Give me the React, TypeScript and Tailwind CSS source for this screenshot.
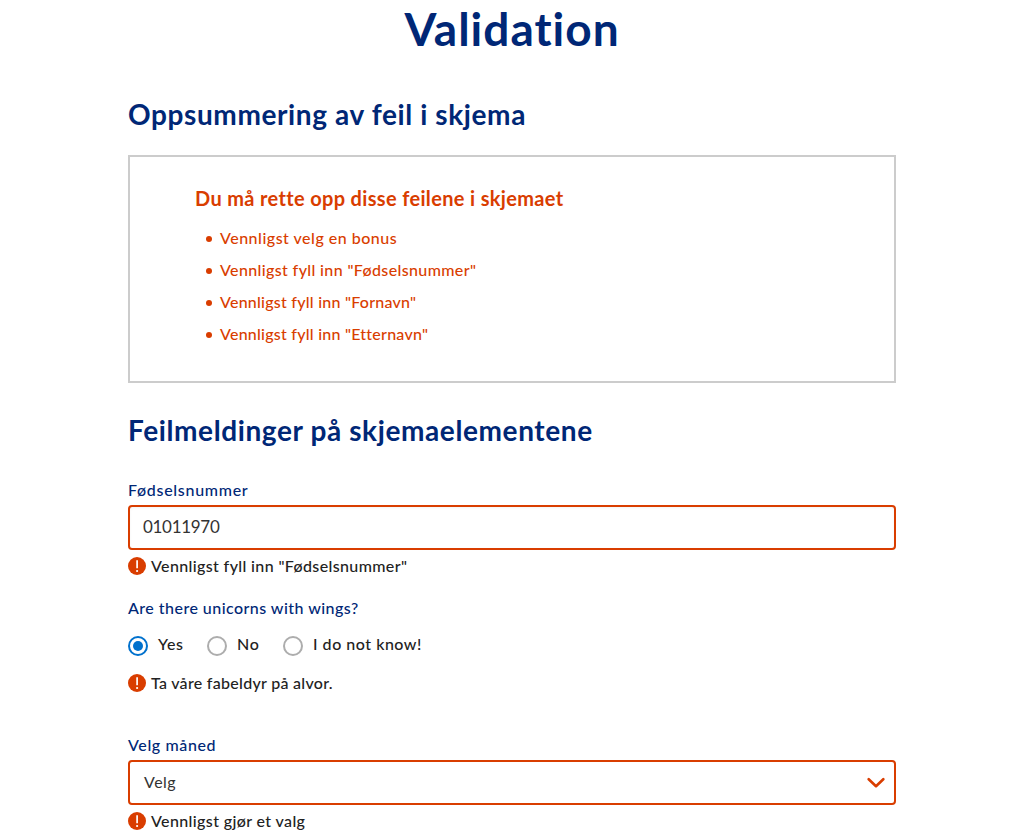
import { useState } from "react";

function ErrorMessage({ children, className = "" }: { children: string; className?: string }) {
  return (
    <div className={`flex h-[18px] items-center gap-[5px] font-medium whitespace-nowrap text-[#222222] ${className}`}>
      <svg width="18" height="18" viewBox="0 0 18 18" className="shrink-0" aria-hidden="true">
        <circle cx="9" cy="9" r="9" fill="#d93d00" />
        <path d="M9.1 3.2v8" stroke="#fff" strokeWidth="1.7" />
        <circle cx="9.1" cy="14" r="1.1" fill="#fff" />
      </svg>
      <span>{children}</span>
    </div>
  );
}

const errors = [
  { text: "Vennligst velg en bonus", spacing: "tracking-[0.5px]" },
  { text: 'Vennligst fyll inn "Fødselsnummer"', spacing: "tracking-[0.37px]" },
  { text: 'Vennligst fyll inn "Fornavn"', spacing: "tracking-[0.24px]" },
  { text: 'Vennligst fyll inn "Etternavn"', spacing: "tracking-[0.24px]" },
];

const options = [
  { text: "Yes", spacing: "tracking-[0.6px]", width: "w-[79px]" },
  { text: "No", spacing: "tracking-[0.8px]", width: "w-[76px]" },
  { text: "I do not know!", spacing: "tracking-[0.52px]", width: "w-[160px]" },
];

export default function App() {
  const [selected, setSelected] = useState("Yes");
  const [number, setNumber] = useState("01011970");

  return (
    <main className="h-[834px] overflow-hidden bg-white font-['Lato',sans-serif] text-base leading-[18px]">
      <div className="ml-32 flex w-[768px] flex-col">
        <h1 className="h-[56px] text-center text-[46px] leading-[58px] font-bold tracking-[1px] text-[#002776]">
          Validation
        </h1>
        <h2 className="mt-10 h-9 text-[28px] leading-9 font-bold tracking-[0.61px] whitespace-nowrap text-[#002776]">
          Oppsummering av feil i skjema
        </h2>

        <section className="mt-[23px] h-[228px] border-2 border-[#cccccc] pt-[29px] pl-[65px] text-[#d93d00]">
          <h3 className="h-6 text-xl leading-6 font-bold tracking-[0.34px]">
            Du må rette opp disse feilene i skjemaet
          </h3>
          <ul className="mt-3 font-medium">
            {errors.map((e) => (
              <li key={e.text} className="flex h-8 items-center leading-8">
                <span className="mt-0.5 ml-[11px] h-[6px] w-[6px] rounded-full bg-[#d93d00]" />
                <span className={`ml-2 ${e.spacing}`}>{e.text}</span>
              </li>
            ))}
          </ul>
        </section>

        <h2 className="mt-7 h-9 text-[28px] leading-[38px] font-bold tracking-[0.61px] whitespace-nowrap text-[#002776]">
          Feilmeldinger på skjemaelementene
        </h2>

        <label htmlFor="number" className="mt-[34px] h-[18px] font-medium tracking-[0.7px] text-[#002776]">
          Fødselsnummer
        </label>
        <input
          id="number"
          value={number}
          onChange={(e) => setNumber(e.target.value)}
          className="mt-[6px] h-[45px] rounded-[4px] border-2 border-[#d93d00] pr-3 pb-[3px] pl-[13px] text-[17px] font-normal tracking-[-0.3px] text-[#333333] shadow-[inset_0_1px_3px_rgba(0,0,0,0.05)] outline-none"
        />
        <ErrorMessage className="mt-[7px] tracking-[0.37px]">{'Vennligst fyll inn "Fødselsnummer"'}</ErrorMessage>

        <fieldset className="mt-6">
          <legend className="h-[18px] font-medium tracking-[0.46px] text-[#002776]">
            Are there unicorns with wings?
          </legend>
          <div className="flex pt-[19px]">
            {options.map((o) => (
              <label key={o.text} className={`flex h-5 gap-[10px] font-medium whitespace-nowrap text-[#222222] ${o.width}`}>
                <input
                  type="radio"
                  name="unicorns"
                  checked={selected === o.text}
                  onChange={() => setSelected(o.text)}
                  className="peer sr-only"
                />
                <span className="flex h-5 w-5 shrink-0 items-center justify-center rounded-full border-2 border-[#adadad] peer-checked:border-[#0071cd] peer-checked:*:bg-[#0071cd]">
                  <span className="h-[10px] w-[10px] rounded-full" />
                </span>
                <span className={`h-[18px] leading-4 ${o.spacing}`}>{o.text}</span>
              </label>
            ))}
          </div>
        </fieldset>
        <ErrorMessage className="mt-[18px] tracking-[0.29px]">Ta våre fabeldyr på alvor.</ErrorMessage>

        <span className="mt-[44px] h-[18px] font-medium tracking-[0.62px] text-[#002776]">Velg måned</span>
        <button
          type="button"
          className="mt-[6px] flex h-[45px] items-center justify-between rounded-[4px] border-2 border-[#d93d00] pr-[9px] pl-[14px] text-[#333333]"
        >
          <span className="h-5 font-normal tracking-[0.5px]">Velg</span>
          <svg width="18" height="12" viewBox="0 0 18 12" fill="none" aria-hidden="true">
            <path d="M1.7 2.2 9 9.2l7.3-7" stroke="#d93d00" strokeWidth="2.6" strokeLinecap="round" strokeLinejoin="round" />
          </svg>
        </button>
        <ErrorMessage className="mt-[7px] tracking-[0.38px]">Vennligst gjør et valg</ErrorMessage>
      </div>
    </main>
  );
}
